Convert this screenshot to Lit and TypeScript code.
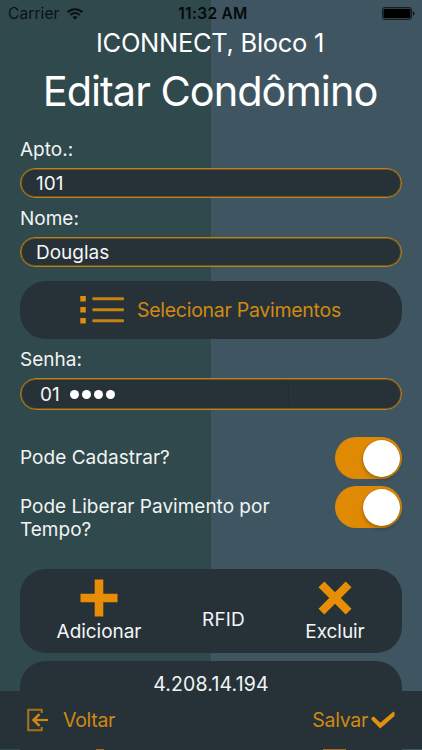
import { LitElement, html, css, svg } from "lit";
import { customElement, property } from "lit/decorators.js";

const icons = {
  wifi: svg`<svg width="18" height="14" viewBox="0 0 18 14" fill="none" stroke="#0b1113" stroke-width="2">
    <path d="M1.6 5.2a10.6 10.6 0 0 1 14.8 0"/><path d="M4.3 8a6.8 6.8 0 0 1 9.4 0"/>
    <path d="M9 12.8 6.5 10.3a3.6 3.6 0 0 1 5 0z" fill="#0b1113" stroke="none"/></svg>`,
  battery: svg`<svg width="33" height="13" viewBox="0 0 33 13"><rect x=".5" y=".5" width="29" height="12" rx="2" fill="none" stroke="#0a0f12" stroke-opacity=".8"/>
    <rect x="1.5" y="1.7" width="27" height="9.6" rx="1" fill="#000"/><path d="M30.8 4.3c2.2.6 2.2 3.8 0 4.4z" fill="#0a0f12"/></svg>`,
  list: svg`<svg width="45" height="30" viewBox="0 0 45 30" fill="#e08c0e"><rect x=".3" y="1" width="5.5" height="5.5"/><rect x=".3" y="12" width="5.5" height="5.5"/><rect x=".3" y="23" width="5.5" height="5.5"/>
    <g fill="#c8820f"><rect x="12.3" y="2.2" width="31.7" height="3" rx="1"/><rect x="12.3" y="13.2" width="31.7" height="3" rx="1"/><rect x="12.3" y="24.2" width="31.7" height="3" rx="1"/></g></svg>`,
  plus: svg`<svg width="38" height="38" viewBox="0 0 38 38"><path d="M14.7.5h8.6v14.2h14.2v8.6H23.3v14.2h-8.6V23.3H.5v-8.6h14.2z" fill="#e88e06"/></svg>`,
  cross: svg`<svg width="34" height="34" viewBox="0 0 34 34"><path d="M6.3.5 17 11.2 27.7.5l5.8 5.8L22.8 17l10.7 10.7-5.8 5.8L17 22.8 6.3 33.5.5 27.7 11.2 17 .5 6.3z" fill="#e88e06"/></svg>`,
  back: svg`<svg width="23" height="24" viewBox="0 0 23 24" fill="none" stroke="#d08710" stroke-width="2.2"><path d="M15.7 5V1.8H2.2v20.4h13.5V19" stroke="#aa7414" stroke-width="2"/><path d="M8 12h14"/><path d="M13.5 6.2 7.5 12l6 5.8" stroke-width="2.5"/></svg>`,
  check: svg`<svg width="24" height="18" viewBox="0 0 24 18"><path d="M.5 6.8 2.8 5.6 9.3 11.8 22.6.6l.9.9v3.4L9.2 17.5.5 8.7z" fill="#e39210"/></svg>`,
};

@customElement("pill-field")
class PillField extends LitElement {
  static styles = css`
    :host { display: block; box-sizing: border-box; border: 1px solid #b9821a; box-shadow: inset 0 0 0 1px #6d5420; border-radius: 16px; background: #263238; padding-left: 15px; color: #f4f6f7; }
    .row { display: flex; align-items: center; height: 100%; }
  `;
  render() {
    return html`<div class="row"><slot></slot></div>`;
  }
}

@customElement("ios-switch")
class IosSwitch extends LitElement {
  @property({ type: Boolean }) checked = false;
  static styles = css`
    .track { box-sizing: border-box; width: 67px; height: 42px; border-radius: 21px; background: #89959b; padding: 2.5px 2px; display: flex; }
    .on { background: #e08a04; justify-content: flex-end; }
    .knob { width: 37px; height: 37px; border-radius: 50%; background: #fff; box-shadow: 0 3px 4px rgba(0, 0, 0, .2), 0 0 1.5px rgba(0, 0, 0, .4); }
  `;
  render() {
    return html`<div class="track ${this.checked ? "on" : ""}"><div class="knob"></div></div>`;
  }
}

@customElement("app-root")
class AppRoot extends LitElement {
  static styles = css`
    :host { display: block; width: 422px; height: 750px; overflow: hidden; font-family: Inter, "Noto Sans", sans-serif; font-size: 19px; color: #f1f4f5; }
    * { box-sizing: border-box; }
    .screen { display: flex; flex-direction: column; height: 750px; background: linear-gradient(90deg, #30494c 211px, #3f5662 211px); white-space: nowrap; }
    .status { display: grid; grid-template-columns: 1fr auto 1fr; align-items: center; height: 27px; padding: 0 7px 0 8px; font-size: 15.5px; color: #0b1113; flex: none; }
    .carrier { display: flex; align-items: center; gap: 6px; letter-spacing: .1px; }
    .time { font-weight: 600; color: #05090a; letter-spacing: .3px; padding-left: 3px; }
    .battery { display: flex; justify-content: flex-end; }
    .site { height: 31px; line-height: 31px; font-size: 25.5px; text-align: center; letter-spacing: -.3px; padding-right: 2px; color: #fff; flex: none; }
    h1 { margin: 0; height: 67px; line-height: 67px; font-size: 41.5px; font-weight: 400; text-align: center; letter-spacing: -1px; padding-right: 2px; color: #fff; flex: none; }
    .content { flex: 1; min-height: 0; overflow: hidden; padding: 0 20px; display: flex; flex-direction: column; }
    .content > * { flex: none; }
    .label { line-height: 41px; height: 39px; }
    .label.first { height: 43px; line-height: 49px; }
    .f1, .f2 { height: 30px; }
    .f3 { height: 32px; padding-left: 19px; }
    .dots { display: flex; gap: 3.2px; padding-left: 10px; }
    .dot { width: 9px; height: 9px; border-radius: 50%; background: #fff; }
    .inner { margin-left: auto; margin-right: 112px; width: 20px; height: 27px; border-right: 1px solid #222c31; border-radius: 0 5px 5px 0; }
    .select { margin-top: 14px; height: 58px; border-radius: 26px; background: #263238; color: #d18911; display: flex; align-items: center; padding-left: 60px; gap: 12px; font-size: 19.5px; letter-spacing: -.28px; }
    .toggle { display: flex; justify-content: space-between; align-items: center; height: 42px; }
    .t1 { margin-top: 27px; }
    .t2 { margin-top: 7px; }
    .one { padding-bottom: 2px; letter-spacing: .04px; }
    .two { line-height: 23px; padding-top: 21px; }
    .card { background: #263238; border-radius: 26px; }
    .rfid { margin-top: 41px; height: 84px; display: grid; grid-template-columns: 158px 90px 134px; }
    .action { display: flex; flex-direction: column; align-items: center; color: #f4f6f7; }
    .icon { height: 50px; display: flex; align-items: center; padding-top: 8px; }
    .action span { line-height: 25px; letter-spacing: -.05px; }
    .name { line-height: 101px; text-align: center; letter-spacing: .15px; padding-left: 1px; }
    .tag { margin-top: 8px; height: 80px; padding-top: 16px; line-height: 14px; text-align: center; font-size: 19.5px; letter-spacing: .15px; }
    .footer { flex: none; height: 58px; background: #263238; color: #d18911; display: flex; align-items: center; justify-content: space-between; padding: 0 27px 0 26px; font-size: 19.5px; letter-spacing: -.3px; }
    .link { display: flex; align-items: center; }
    .link.prev { gap: 14px; }
    .link.save { gap: 3px; }
    .peek { flex: none; height: 1px; margin: 0 20px; background: #263238; display: flex; justify-content: space-between; padding: 0 56px 0 76px; }
    .bit { width: 8px; background: #a56c12; }
    .bit.wide { width: 23px; }
    svg { display: block; }
  `;
  render() {
    return html`<div class="screen">
      <div class="status">
        <div class="carrier"><span>Carrier</span>${icons.wifi}</div>
        <div class="time">11:32 AM</div>
        <div class="battery">${icons.battery}</div>
      </div>
      <div class="site">ICONNECT, Bloco 1</div>
      <h1>Editar Condômino</h1>
      <div class="content">
        <div class="label first">Apto.:</div>
        <pill-field class="f1">101</pill-field>
        <div class="label">Nome:</div>
        <pill-field class="f2">Douglas</pill-field>
        <div class="select">${icons.list}<span>Selecionar Pavimentos</span></div>
        <div class="label">Senha:</div>
        <pill-field class="f3">01<div class="dots">${[0, 1, 2, 3].map(() => html`<div class="dot"></div>`)}</div><div class="inner"></div></pill-field>
        <div class="toggle t1"><span class="one">Pode Cadastrar?</span><ios-switch checked></ios-switch></div>
        <div class="toggle t2"><span class="two">Pode Liberar Pavimento por<br>Tempo?</span><ios-switch checked></ios-switch></div>
        <div class="card rfid">
          <div class="action"><div class="icon">${icons.plus}</div><span>Adicionar</span></div>
          <div class="name">RFID</div>
          <div class="action"><div class="icon">${icons.cross}</div><span>Excluir</span></div>
        </div>
        <div class="card tag">4.208.14.194</div>
      </div>
      <div class="footer">
        <div class="link prev">${icons.back}<span>Voltar</span></div>
        <div class="link save"><span>Salvar</span>${icons.check}</div>
      </div>
      <div class="peek"><div class="bit"></div><div class="bit wide"></div></div>
    </div>`;
  }
}
